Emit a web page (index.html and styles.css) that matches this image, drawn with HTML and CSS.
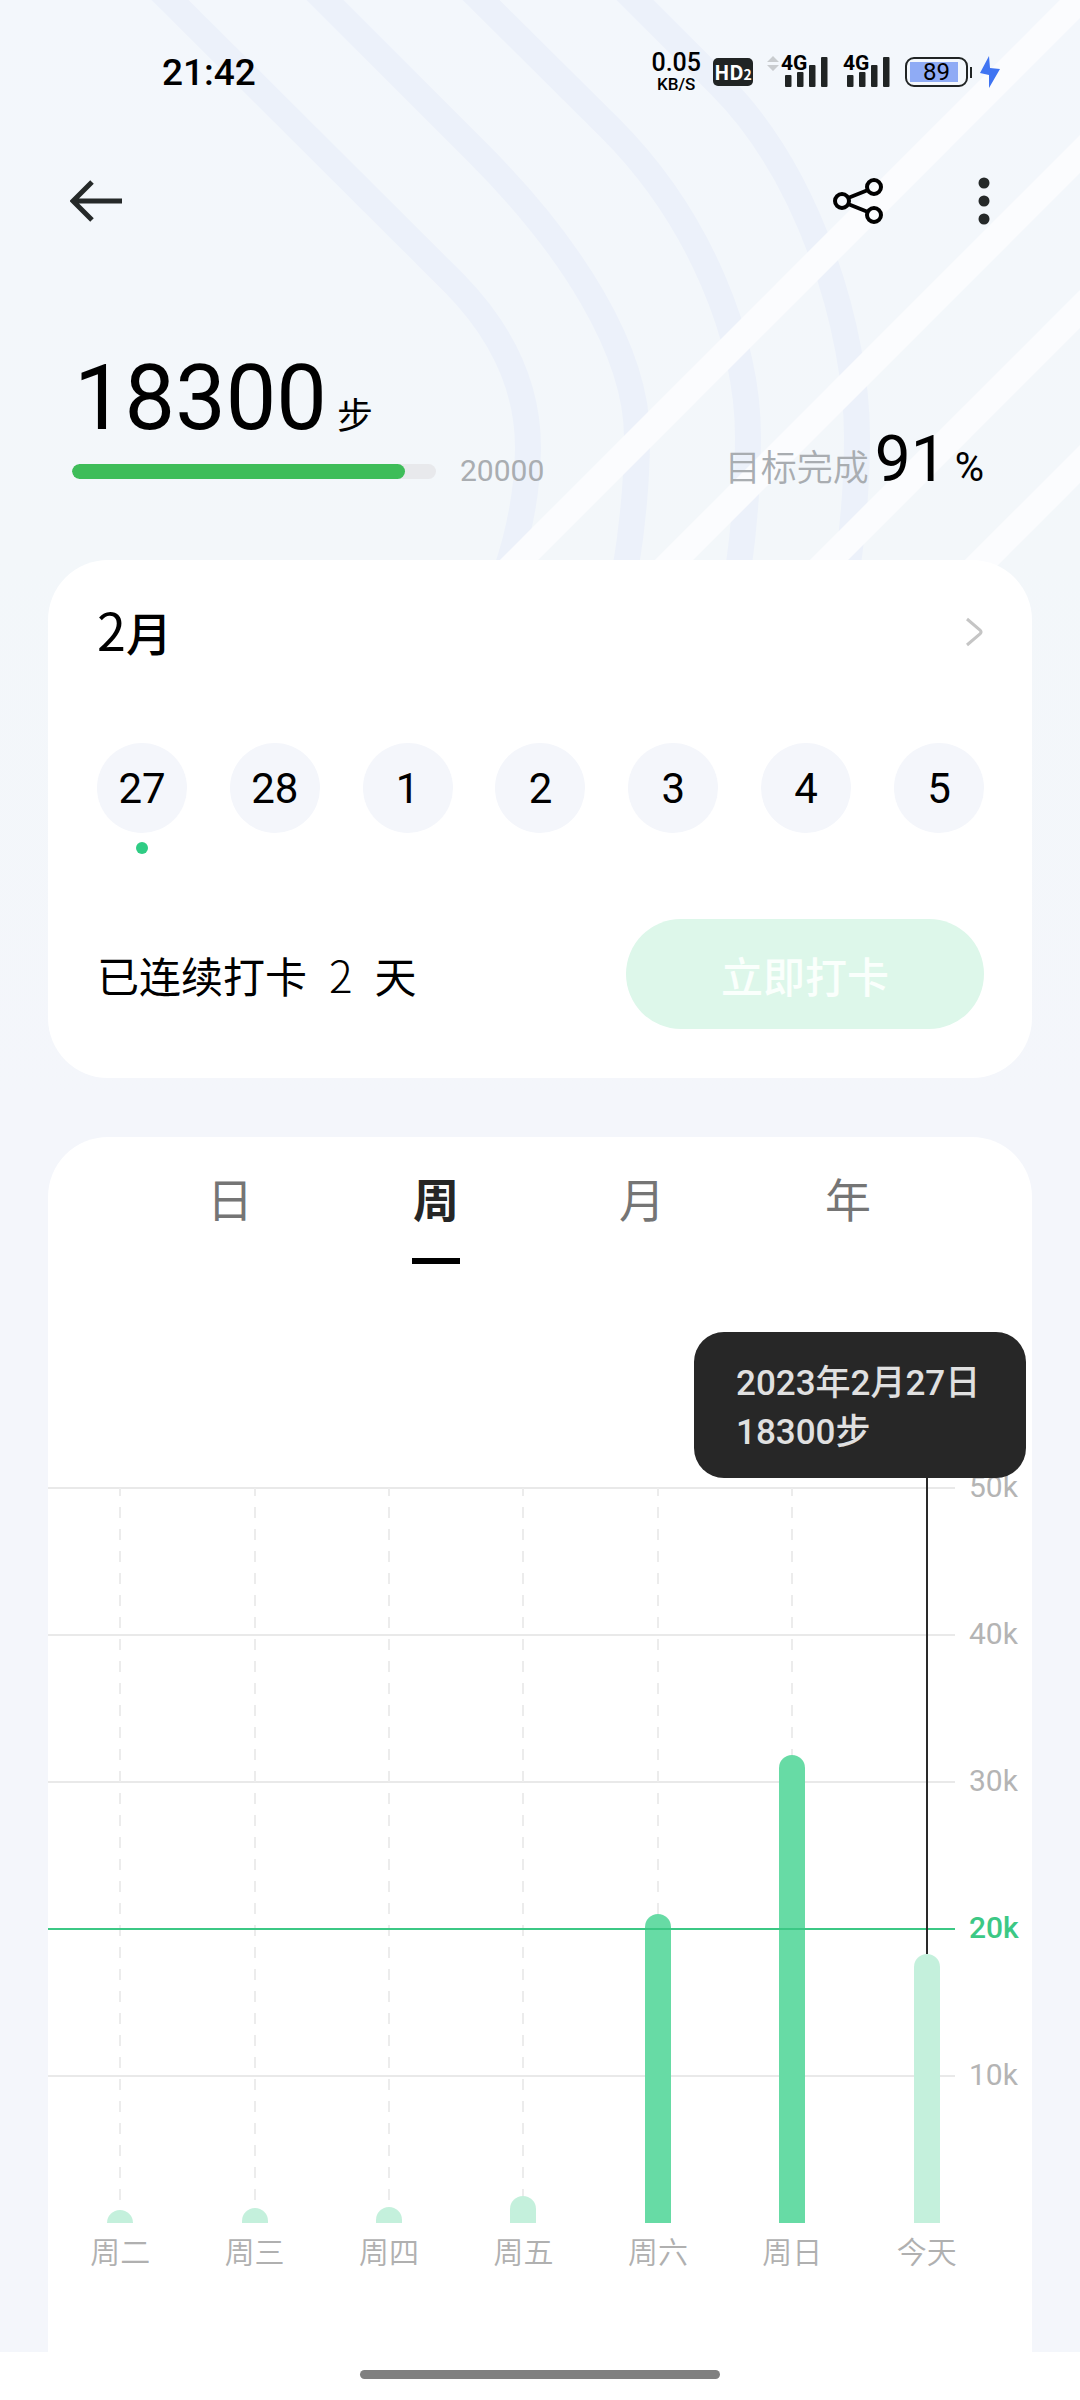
FILE: index.html
```
<!DOCTYPE html>
<html lang="zh-CN">
<head>
<meta charset="utf-8">
<meta name="viewport" content="width=device-width, initial-scale=1">
<title>步数</title>
<link rel="stylesheet" href="styles.css">
</head>
<body>
<div class="page">
  <svg class="backdrop" viewBox="0 0 1080 570" preserveAspectRatio="xMaxYMin slice" aria-hidden="true">
    <g fill="none" stroke="#ecf1fa" stroke-width="26">
      <path d="M160 -10L455 284Q529 360 528 450Q527 510 506 572"/>
      <path d="M315 -10L478 153C570 245 637 350 637 437Q637 500 625 572"/>
      <path d="M471 -10L610 128C700 218 748 340 748 437Q748 500 738 572"/>
      <path d="M625 -10L720 85C810 175 857 330 857 437Q857 500 847 572"/>
    </g>
    <g stroke="#fbfcfe" stroke-width="27">
      <path d="M1099 -20L499 580M1254 -20L654 580M1409 -20L809 580M1564 -20L964 580"/>
    </g>
  </svg>

  <header class="top">
    <div class="status">
      <span class="clock">21:42</span>
      <div class="indicators">
        <div class="speed"><span class="speed-value">0.05</span><span class="speed-unit">KB/S</span></div>
        <span class="hd">HD<small>2</small></span>
        <div class="signal">
          <svg class="updown" width="12" height="15" viewBox="0 0 12 15" fill="#c9cccf" aria-hidden="true"><path d="M0 6L6 0L12 6ZM0 9L6 15L12 9Z"/></svg>
          <div class="cell"><span class="network">4G</span>
            <svg width="43" height="32" viewBox="0 0 43 32" fill="#202424" aria-hidden="true"><rect y="19" width="6.500" height="12" rx="1"/><rect x="12" y="16" width="6.500" height="15" rx="1"/><rect x="24" y="9" width="6.500" height="22" rx="1"/><rect x="36" y="1" width="6.500" height="30" rx="1"/></svg>
          </div>
        </div>
        <div class="signal">
          <div class="cell"><span class="network">4G</span>
            <svg width="43" height="32" viewBox="0 0 43 32" fill="#202424" aria-hidden="true"><rect y="19" width="6.500" height="12" rx="1"/><rect x="12" y="16" width="6.500" height="15" rx="1"/><rect x="24" y="9" width="6.500" height="22" rx="1"/><rect x="36" y="1" width="6.500" height="30" rx="1"/></svg>
          </div>
        </div>
        <div class="power">
          <span class="battery">89</span><span class="nub"></span>
          <svg width="20" height="32" viewBox="0 0 20 32" fill="#3f74f2" aria-hidden="true"><path d="M9 0L0 17L9 19V32L20 13L10 12Z"/></svg>
        </div>
      </div>
    </div>
    <nav class="appbar">
      <button class="icon-button" type="button" aria-label="返回">
        <svg width="54" height="54" viewBox="0 0 54 54" fill="none" stroke="#252929" stroke-width="5" aria-hidden="true"><path d="M52 27H3M22 8L3 27L22 46"/></svg>
      </button>
      <div class="actions">
        <button class="icon-button" type="button" aria-label="分享">
          <svg width="54" height="54" viewBox="0 0 54 54" fill="none" stroke="#000" stroke-width="4" aria-hidden="true"><circle cx="11" cy="27" r="7"/><circle cx="43" cy="13" r="7"/><circle cx="43" cy="41" r="7"/><path d="M17 24L37 16M17 30L37 38"/></svg>
        </button>
        <button class="icon-button" type="button" aria-label="更多">
          <svg width="12" height="54" viewBox="0 0 12 54" fill="#252929" aria-hidden="true"><circle cx="6" cy="9" r="5.500"/><circle cx="6" cy="27" r="5.500"/><circle cx="6" cy="45" r="5.500"/></svg>
        </button>
      </div>
    </nav>
  </header>

  <main>
    <section class="summary">
      <div class="steps">
        <div class="count"><strong>18300</strong><span>步</span></div>
        <div class="goal"><div class="track"><div class="fill" style="width:91.5%"></div></div><span>20000</span></div>
      </div>
      <div class="complete"><span class="caption">目标完成</span><span class="rate">91</span><span class="percent">%</span></div>
    </section>

    <section class="card checkin">
      <div class="month">
        <h2><span>2</span>月</h2>
        <button class="icon-button" type="button" aria-label="查看日历">
          <svg width="19" height="32" viewBox="0 0 19 32" fill="none" stroke="#c5c5c5" stroke-width="3" aria-hidden="true"><path d="M2 3L15 14Q17 16 15 18L2 29"/></svg>
        </button>
      </div>
      <div class="dates">
        <button class="date marked" type="button">27</button>
        <button class="date" type="button">28</button>
        <button class="date" type="button">1</button>
        <button class="date" type="button">2</button>
        <button class="date" type="button">3</button>
        <button class="date" type="button">4</button>
        <button class="date" type="button">5</button>
      </div>
      <div class="streak">
        <p><span>已连续打卡</span><span class="streak-days">2</span><span>天</span></p>
        <button class="check-button" type="button">立即打卡</button>
      </div>
    </section>

    <section class="card stats">
      <div class="tabs" role="tablist">
        <button class="tab" role="tab" type="button">日</button>
        <button class="tab active" role="tab" type="button" aria-selected="true">周</button>
        <button class="tab" role="tab" type="button">月</button>
        <button class="tab" role="tab" type="button">年</button>
      </div>
      <div class="chart">
        <div class="scale">
          <div class="tick"><i></i><span>50k</span></div>
          <div class="tick"><i></i><span>40k</span></div>
          <div class="tick"><i></i><span>30k</span></div>
          <div class="tick target"><i></i><span>20k</span></div>
          <div class="tick"><i></i><span>10k</span></div>
        </div>
        <div class="bars">
          <div class="column"><div class="guide"></div><div class="bar" style="height:1.8%"></div></div>
          <div class="column"><div class="guide"></div><div class="bar" style="height:2.1%"></div></div>
          <div class="column"><div class="guide"></div><div class="bar" style="height:2.2%"></div></div>
          <div class="column"><div class="guide"></div><div class="bar" style="height:3.7%"></div></div>
          <div class="column"><div class="guide"></div><div class="bar reached" style="height:42%"></div></div>
          <div class="column"><div class="guide"></div><div class="bar reached" style="height:63.7%"></div></div>
          <div class="column today"><div class="guide"></div><div class="bar" style="height:36.6%"></div>
            <div class="tooltip">2023年2月27日<br>18300步</div>
          </div>
        </div>
        <div class="days"><span>周二</span><span>周三</span><span>周四</span><span>周五</span><span>周六</span><span>周日</span><span>今天</span></div>
      </div>
    </section>
  </main>
  <footer class="home"><span></span></footer>
</div>
</body>
</html>
```
FILE: styles.css
```
* { box-sizing: border-box; }

body {
  margin: 0;
  color: #000;
  background: #fff;
  font-family: Roboto, "Noto Sans CJK SC", sans-serif;
}

button {
  margin: 0;
  padding: 0;
  border: 0;
  background: none;
  color: inherit;
  font: inherit;
}

svg { display: block; }

.page {
  position: relative;
  z-index: 0;
  display: flex;
  flex-direction: column;
  min-height: 100vh;
  background: linear-gradient(#f3f7fc, #f3f7fa 560px, #f4f6fb 1100px);
}

.backdrop {
  position: absolute;
  z-index: -1;
  top: 0;
  left: 0;
  width: 100%;
  height: 570px;
}

/* Status bar */
.status {
  display: flex;
  align-items: center;
  justify-content: space-between;
  height: 144px;
  padding: 0 80px 0 162px;
}

.clock { font-size: 37px; font-weight: 500; }

.indicators { display: flex; align-items: center; }

.speed {
  display: flex;
  flex-direction: column;
  align-items: center;
  margin-right: 12px;
  font-weight: 500;
}
.speed-value { font-size: 25px; line-height: 24px; }
.speed-unit { font-size: 17px; line-height: 18px; }

.hd {
  display: flex;
  align-items: baseline;
  justify-content: center;
  width: 40px;
  height: 28px;
  margin-right: 14px;
  border-radius: 5px;
  background: #202424;
  color: #fff;
  font: 700 20px/28px "Noto Sans CJK SC", sans-serif;
}
.hd small { font-size: 14px; }

.signal { display: flex; margin-right: 14px; }
.updown { margin-right: 2px; }
.cell { position: relative; width: 48px; height: 32px; padding-left: 4px; }
.network {
  position: absolute;
  top: -3px;
  left: 0;
  font-size: 21px;
  font-weight: 700;
  line-height: 21px;
}

.power { display: flex; align-items: center; }
.battery {
  width: 63px;
  height: 30px;
  border: 2px solid #202424;
  border-radius: 9px;
  background: linear-gradient(90deg, #8fabf5 48px, transparent 48px) 3px 3px / 53px 20px no-repeat;
  font-size: 24px;
  line-height: 26px;
  text-align: center;
}
.nub { width: 2px; height: 11px; margin: 0 8px 0 2px; background: #202424; }

/* App bar */
.appbar {
  display: flex;
  align-items: center;
  justify-content: space-between;
  height: 114px;
  padding: 0 90px 0 70px;
}
.actions { display: flex; gap: 93px; }

/* Summary */
.summary {
  display: flex;
  align-items: flex-end;
  justify-content: space-between;
  height: 302px;
  padding: 0 96px 56px 72px;
}
.steps { padding-bottom: 15px; }
.count { display: flex; align-items: baseline; gap: 10px; margin-bottom: 4px; padding-left: 2px; }
.count strong { font-size: 90px; font-weight: 400; line-height: 100px; }
.count span { font-size: 36px; }
.goal { display: flex; align-items: center; gap: 24px; color: #a9adb1; font-size: 30px; line-height: 36px; }
.track { width: 364px; height: 15px; border-radius: 8px; background: #e8e9ec; overflow: hidden; }
.fill { height: 100%; border-radius: 8px; background: #3ebd59; }
.complete { display: flex; align-items: baseline; line-height: 70px; }
.caption { margin-right: 6px; color: #a9adb1; font-size: 36px; font-weight: 350; }
.rate { margin-right: 8px; font-size: 64px; }
.percent { font-size: 40px; }

/* Cards */
main { display: flex; flex: 1; flex-direction: column; }
.card { margin: 0 48px; border-radius: 60px; background: #fff; }
.checkin { margin-bottom: 59px; padding: 36px 48px 49px 49px; }

.month { display: flex; align-items: center; justify-content: space-between; height: 72px; }
h2 { margin: 0; padding-bottom: 4px; font: 500 46px/68px "Noto Sans CJK SC", sans-serif; }
h2 span { font-size: 52px; font-weight: 400; }

.dates { display: flex; justify-content: space-between; margin-top: 75px; }
.date {
  position: relative;
  width: 90px;
  height: 90px;
  border-radius: 50%;
  background: #f4f6fb;
  font-size: 42px;
}
.marked::after {
  position: absolute;
  top: 99px;
  left: 39px;
  width: 12px;
  height: 12px;
  border-radius: 50%;
  background: #2fcc84;
  content: "";
}

.streak { display: flex; align-items: center; justify-content: space-between; margin-top: 86px; }
.streak p {
  display: flex;
  align-items: baseline;
  gap: 22px;
  margin: 0;
  font: 400 42px/60px "Noto Sans CJK SC", sans-serif;
}
.streak-days { font-size: 44px; font-weight: 300; }
.check-button {
  width: 358px;
  height: 110px;
  border-radius: 55px;
  background: #ddf7ea;
  color: #fafffc;
  font-size: 42px;
  font-weight: 500;
}

/* Statistics */
.stats { flex: 1; border-radius: 60px 60px 0 0; padding-bottom: 60px; }
.tabs { display: grid; grid-template-columns: repeat(4, 1fr); padding: 32px 81px 0 79px; }
.tab {
  display: flex;
  flex-direction: column;
  align-items: center;
  gap: 25px;
  color: #757575;
  font-size: 46px;
  line-height: 64px;
}
.tab::after { width: 48px; height: 6px; content: ""; }
.active { color: #262626; font-weight: 700; }
.active::after { background: #000; }

.chart { display: grid; margin-top: 206px; }
.scale, .bars { grid-area: 1 / 1; }
.tick { display: flex; align-items: center; gap: 14px; height: 36px; margin-bottom: 111px; color: #b4b4b4; font-size: 30px; }
.tick:last-child { margin-bottom: 129px; }
.tick i { flex: 1; height: 2px; background: #e9e9e9; }
.tick span { width: 63px; padding-bottom: 3px; }
.target { position: relative; z-index: 1; color: #3cc885; font-weight: 500; }
.target i { background: #3cc885; }

.bars, .days { display: grid; grid-template-columns: repeat(7, 1fr); margin: 0 38px 0 5px; }
.bars { margin-top: 18px; }
.column { display: flex; flex-direction: column; align-items: center; }
.guide {
  flex: 1;
  width: 2px;
  background: repeating-linear-gradient(#ececec 0 8px, transparent 8px 19px, #ececec 19px 22px);
}
.bar { width: 26px; border-radius: 13px 13px 0 0; background: #c4f0dc; }
.reached { background: #67dba5; }
.today { position: relative; z-index: 2; }
.today .guide { margin-top: -10px; background: #2a2a2a; }
.tooltip {
  position: absolute;
  right: -32px;
  bottom: calc(100% + 10px);
  width: 332px;
  padding: 27px 0 21px 42px;
  border-radius: 30px;
  background: #272727;
  color: #e0e0e0;
  font-size: 35px;
  font-weight: 500;
  line-height: 49px;
  white-space: nowrap;
}

.days { color: #b0b0b0; font-size: 30px; font-weight: 350; line-height: 60px; text-align: center; }

.home { display: flex; align-items: center; justify-content: center; height: 48px; padding-bottom: 3px; background: #fff; }
.home span { width: 360px; height: 9px; border-radius: 5px; background: #808080; }
```
